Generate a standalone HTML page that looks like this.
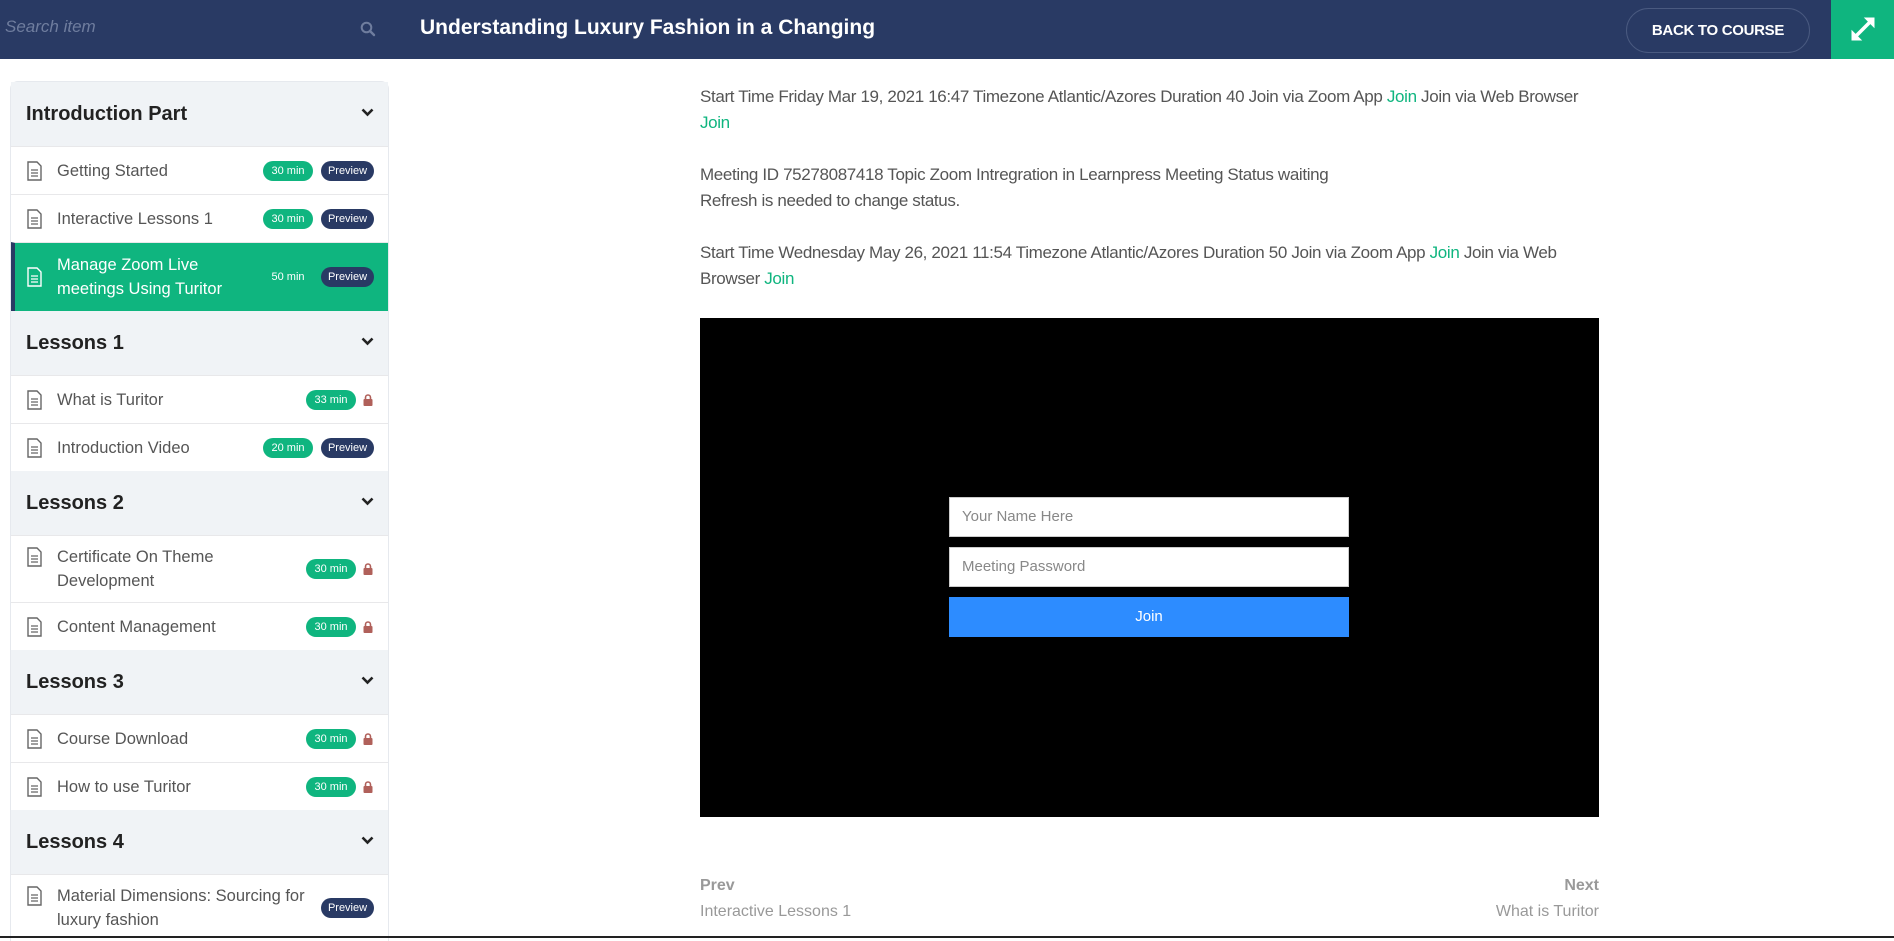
<!DOCTYPE html>
<html><head><meta charset="utf-8"><style>
*{box-sizing:border-box;margin:0;padding:0}
body{width:1894px;height:938px;overflow:hidden;background:#fff;font-family:"Liberation Sans",sans-serif;position:relative}
.top{position:absolute;left:0;top:0;width:1894px;height:59px;background:#293a64}
.search{position:absolute;left:5px;top:17px;font-style:italic;font-size:17px;color:#6f7d9e}
.sicon{position:absolute;left:360px;top:21px}
.title{position:absolute;left:420px;top:16px;font-size:21px;font-weight:bold;color:#fff}
.back{position:absolute;left:1626px;top:8px;width:184px;height:45px;border:1px solid #4a5a80;border-radius:23px;color:#fff;font-weight:bold;font-size:15px;text-align:center;line-height:43px;letter-spacing:-0.3px}
.exp{position:absolute;left:1831px;top:0;width:63px;height:59px;background:#0fb57f}
.side{position:absolute;left:10px;top:81px;width:379px;background:#f0f3f6;border-radius:8px 8px 0 0;border:1px solid #e6e9ee;border-bottom:none}
.sec{height:64px;position:relative;padding-left:15px;font-size:20px;font-weight:bold;color:#222;line-height:64px;background:#f0f3f6}
.sec svg{position:absolute;right:14px;top:26px}
.it{position:relative;background:#fff;border-top:1px solid #e8e8ea;color:#555;font-size:16.5px;padding-left:46px;display:flex;align-items:center;line-height:24px}
.it .ic{position:absolute;left:16px;top:50%;margin-top:-10px}
.h48{height:48px}.h67{height:67px}
.act{background:#0fb57f;color:#fff;border-left:4px solid #293a64;padding-left:42px;height:69px}
.act .ic{left:12px}
.b{position:absolute;top:50%;margin-top:-10px;height:20px;border-radius:10px;font-size:11px;color:#fff;text-align:center;line-height:20px}
.g{background:#0fb57f;width:50px}
.p{background:#293a64;width:53px;right:14px}
.lock{position:absolute;right:15px;top:50%;margin-top:-6px}
.txt{position:absolute;left:700px;font-size:17px;color:#555;line-height:26px;white-space:nowrap;letter-spacing:-0.35px}
.txt a{color:#0fb57f;text-decoration:none}
.video{position:absolute;left:700px;top:318px;width:899px;height:499px;background:#000}
.inp{position:absolute;left:249px;width:400px;height:40px;background:#fff;border:1px solid #ccc;font-size:15px;color:#888;padding-left:12px;line-height:38px}
.join{position:absolute;left:249px;top:279px;width:400px;height:40px;background:#2d8cff;color:#fff;font-size:15px;text-align:center;line-height:40px}
.nav{position:absolute;font-size:16px;color:#999}
</style></head><body>
<div class="top">
<div class="search">Search item</div>
<svg class="sicon" width="16" height="16" viewBox="0 0 16 16"><circle cx="6.5" cy="6.5" r="4.8" fill="none" stroke="#6f7d9e" stroke-width="2"/><path d="M10 10l4 4" stroke="#6f7d9e" stroke-width="2.4" stroke-linecap="round"/></svg>
<div class="title">Understanding Luxury Fashion in a Changing</div>
<div class="back">BACK TO COURSE</div>
<div class="exp"><svg width="63" height="59" viewBox="0 0 63 59"><g stroke="#fff" stroke-width="3.5" fill="#fff"><path d="M24 37L40 21"/><path d="M21 40v-9l9 9z" stroke-width="1"/><path d="M43 18v9l-9-9z" stroke-width="1"/></g></svg></div>
</div>

<div class="side">
<div class="sec">Introduction Part<svg width="13" height="9" viewBox="0 0 13 9"><path d="M1.5 1.5l5 5 5-5" fill="none" stroke="#222" stroke-width="2.6"/></svg></div>
<div class="it h48"><svg class="ic" width="15" height="20" viewBox="0 0 15 20"><path d="M1 1h9l4 4v14H1z" fill="none" stroke="#666" stroke-width="1.4"/><path d="M4 9h7M4 12h7M4 15h7" stroke="#666" stroke-width="1.3"/></svg>Getting Started<span class="b g" style="right:75px">30 min</span><span class="b p">Preview</span></div>
<div class="it h48"><svg class="ic" width="15" height="20" viewBox="0 0 15 20"><path d="M1 1h9l4 4v14H1z" fill="none" stroke="#666" stroke-width="1.4"/><path d="M4 9h7M4 12h7M4 15h7" stroke="#666" stroke-width="1.3"/></svg>Interactive Lessons 1<span class="b g" style="right:75px">30 min</span><span class="b p">Preview</span></div>
<div class="it act"><svg class="ic" width="15" height="20" viewBox="0 0 15 20"><path d="M1 1h9l4 4v14H1z" fill="none" stroke="#fff" stroke-width="1.4"/><path d="M4 9h7M4 12h7M4 15h7" stroke="#fff" stroke-width="1.3"/></svg>Manage Zoom Live<br>meetings Using Turitor<span class="b" style="right:75px;width:50px;background:none">50 min</span><span class="b p">Preview</span></div>
<div class="sec">Lessons 1<svg width="13" height="9" viewBox="0 0 13 9"><path d="M1.5 1.5l5 5 5-5" fill="none" stroke="#222" stroke-width="2.6"/></svg></div>
<div class="it h48"><svg class="ic" width="15" height="20" viewBox="0 0 15 20"><path d="M1 1h9l4 4v14H1z" fill="none" stroke="#666" stroke-width="1.4"/><path d="M4 9h7M4 12h7M4 15h7" stroke="#666" stroke-width="1.3"/></svg>What is Turitor<span class="b g" style="right:32px">33 min</span><svg class="lock" width="10" height="12" viewBox="0 0 10 12"><path d="M2.5 5V3.5a2.5 2.5 0 015 0V5" fill="none" stroke="#b0605a" stroke-width="1.6"/><rect x="0.5" y="5" width="9" height="7" rx="1" fill="#b0605a"/></svg></div>
<div class="it h48"><svg class="ic" width="15" height="20" viewBox="0 0 15 20"><path d="M1 1h9l4 4v14H1z" fill="none" stroke="#666" stroke-width="1.4"/><path d="M4 9h7M4 12h7M4 15h7" stroke="#666" stroke-width="1.3"/></svg>Introduction Video<span class="b g" style="right:75px">20 min</span><span class="b p">Preview</span></div>
<div class="sec">Lessons 2<svg width="13" height="9" viewBox="0 0 13 9"><path d="M1.5 1.5l5 5 5-5" fill="none" stroke="#222" stroke-width="2.6"/></svg></div>
<div class="it h67"><svg class="ic" width="15" height="20" viewBox="0 0 15 20" style="margin-top:-22px"><path d="M1 1h9l4 4v14H1z" fill="none" stroke="#666" stroke-width="1.4"/><path d="M4 9h7M4 12h7M4 15h7" stroke="#666" stroke-width="1.3"/></svg>Certificate On Theme<br>Development<span class="b g" style="right:32px">30 min</span><svg class="lock" width="10" height="12" viewBox="0 0 10 12"><path d="M2.5 5V3.5a2.5 2.5 0 015 0V5" fill="none" stroke="#b0605a" stroke-width="1.6"/><rect x="0.5" y="5" width="9" height="7" rx="1" fill="#b0605a"/></svg></div>
<div class="it h48"><svg class="ic" width="15" height="20" viewBox="0 0 15 20"><path d="M1 1h9l4 4v14H1z" fill="none" stroke="#666" stroke-width="1.4"/><path d="M4 9h7M4 12h7M4 15h7" stroke="#666" stroke-width="1.3"/></svg>Content Management<span class="b g" style="right:32px">30 min</span><svg class="lock" width="10" height="12" viewBox="0 0 10 12"><path d="M2.5 5V3.5a2.5 2.5 0 015 0V5" fill="none" stroke="#b0605a" stroke-width="1.6"/><rect x="0.5" y="5" width="9" height="7" rx="1" fill="#b0605a"/></svg></div>
<div class="sec">Lessons 3<svg width="13" height="9" viewBox="0 0 13 9"><path d="M1.5 1.5l5 5 5-5" fill="none" stroke="#222" stroke-width="2.6"/></svg></div>
<div class="it h48"><svg class="ic" width="15" height="20" viewBox="0 0 15 20"><path d="M1 1h9l4 4v14H1z" fill="none" stroke="#666" stroke-width="1.4"/><path d="M4 9h7M4 12h7M4 15h7" stroke="#666" stroke-width="1.3"/></svg>Course Download<span class="b g" style="right:32px">30 min</span><svg class="lock" width="10" height="12" viewBox="0 0 10 12"><path d="M2.5 5V3.5a2.5 2.5 0 015 0V5" fill="none" stroke="#b0605a" stroke-width="1.6"/><rect x="0.5" y="5" width="9" height="7" rx="1" fill="#b0605a"/></svg></div>
<div class="it h48"><svg class="ic" width="15" height="20" viewBox="0 0 15 20"><path d="M1 1h9l4 4v14H1z" fill="none" stroke="#666" stroke-width="1.4"/><path d="M4 9h7M4 12h7M4 15h7" stroke="#666" stroke-width="1.3"/></svg>How to use Turitor<span class="b g" style="right:32px">30 min</span><svg class="lock" width="10" height="12" viewBox="0 0 10 12"><path d="M2.5 5V3.5a2.5 2.5 0 015 0V5" fill="none" stroke="#b0605a" stroke-width="1.6"/><rect x="0.5" y="5" width="9" height="7" rx="1" fill="#b0605a"/></svg></div>
<div class="sec">Lessons 4<svg width="13" height="9" viewBox="0 0 13 9"><path d="M1.5 1.5l5 5 5-5" fill="none" stroke="#222" stroke-width="2.6"/></svg></div>
<div class="it h67"><svg class="ic" width="15" height="20" viewBox="0 0 15 20" style="margin-top:-22px"><path d="M1 1h9l4 4v14H1z" fill="none" stroke="#666" stroke-width="1.4"/><path d="M4 9h7M4 12h7M4 15h7" stroke="#666" stroke-width="1.3"/></svg>Material Dimensions: Sourcing for<br>luxury fashion<span class="b p">Preview</span></div>
</div>

<div class="txt" style="top:84px">Start Time Friday Mar 19, 2021 16:47 Timezone Atlantic/Azores Duration 40 Join via Zoom App <a>Join</a> Join via Web Browser<br><a>Join</a></div>
<div class="txt" style="top:162px">Meeting ID 75278087418 Topic Zoom Intregration in Learnpress Meeting Status waiting<br>Refresh is needed to change status.</div>
<div class="txt" style="top:240px">Start Time Wednesday May 26, 2021 11:54 Timezone Atlantic/Azores Duration 50 Join via Zoom App <a>Join</a> Join via Web<br>Browser <a>Join</a></div>

<div class="video">
<div class="inp" style="top:179px">Your Name Here</div>
<div class="inp" style="top:229px">Meeting Password</div>
<div class="join">Join</div>
</div>

<div class="nav" style="left:700px;top:877px;font-weight:bold">Prev</div>
<div class="nav" style="left:700px;top:903px">Interactive Lessons 1</div>
<div class="nav" style="right:295px;top:877px;font-weight:bold">Next</div>
<div class="nav" style="right:295px;top:903px">What is Turitor</div>
<div style="position:absolute;left:0;top:936px;width:1894px;height:2px;background:#222"></div>
</body></html>
